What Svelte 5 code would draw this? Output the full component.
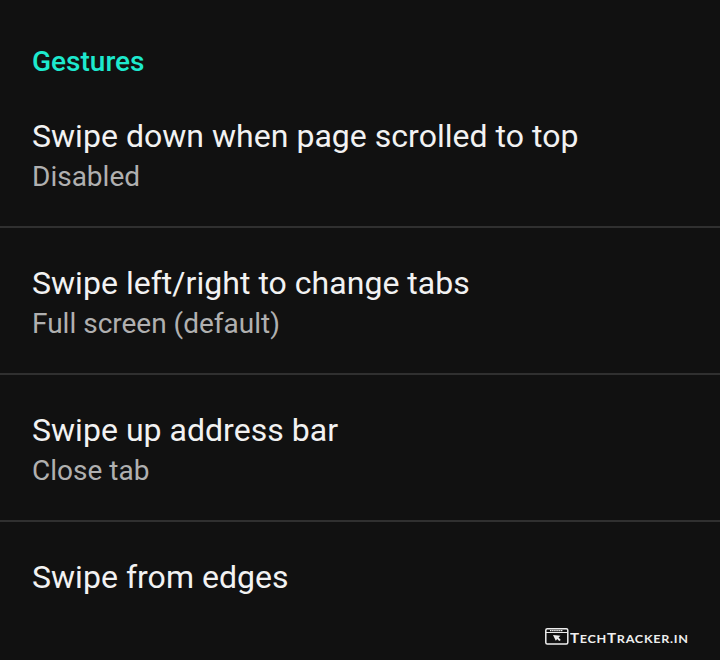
<script>
  const settings = [
    { title: 'Swipe down when page scrolled to top', value: 'Disabled' },
    { title: 'Swipe left/right to change tabs', value: 'Full screen (default)' },
    { title: 'Swipe up address bar', value: 'Close tab' },
    { title: 'Swipe from edges', value: '' }
  ];
</script>

<main>
  <h2>Gestures</h2>
  {#each settings as s}
    <section>
      <div class="title">{s.title}</div>
      {#if s.value}<div class="value">{s.value}</div>{/if}
    </section>
  {/each}
  <div class="mark">
    <svg width="24" height="17" viewBox="0 0 24 17" fill="none" stroke="#eee">
      <rect x="0.8" y="0.8" width="22" height="15.2" rx="1.5" stroke-width="1.5" />
      <path d="M1 4.5H23" stroke-width="1" />
      <path d="M5 2.6H18" stroke-width="1.2" stroke-dasharray="1.5 0.6" />
      <path d="M8 7L15.5 7.8L13.6 9.4L15.8 12L14.2 13L12.2 11L10.8 12.8Z" fill="#eee" stroke="none" />
    </svg>
    <span><b>T</b>ECH<b>T</b>RACKER.IN</span>
  </div>
</main>

<style>
  :global(body) { margin: 0; background: #111; }
  main {
    position: relative;
    box-sizing: border-box;
    width: 720px;
    height: 660px;
    padding-top: 44px;
    overflow: hidden;
    background: #111;
    font-family: Roboto, sans-serif;
  }
  h2 { margin: 0 0 4px 32px; font-size: 28px; line-height: 36px; font-weight: 500; color: #1de9ce; }
  section {
    box-sizing: border-box;
    height: 147px;
    padding: 35px 32px 0;
    border-bottom: 2px solid #303030;
    white-space: nowrap;
  }
  h2 + section { height: 144px; padding-top: 32px; }
  section:last-of-type { border: 0; }
  .title { font-size: 32px; line-height: 40px; letter-spacing: 0.03px; color: #f2f2f2; }
  .value { padding-top: 1px; font-size: 28px; line-height: 40px; color: #b0b0b0; }
  .mark { position: absolute; left: 545px; top: 628px; display: flex; align-items: flex-start; color: #eee; }
  .mark span {
    margin: 1px 0 0 1px;
    font: 700 10.8px/18px Lato, sans-serif;
    letter-spacing: 0.6px;
    transform: scaleX(1.168);
    transform-origin: left;
  }
  .mark b { font-size: 13px; font-weight: 700; }
</style>
